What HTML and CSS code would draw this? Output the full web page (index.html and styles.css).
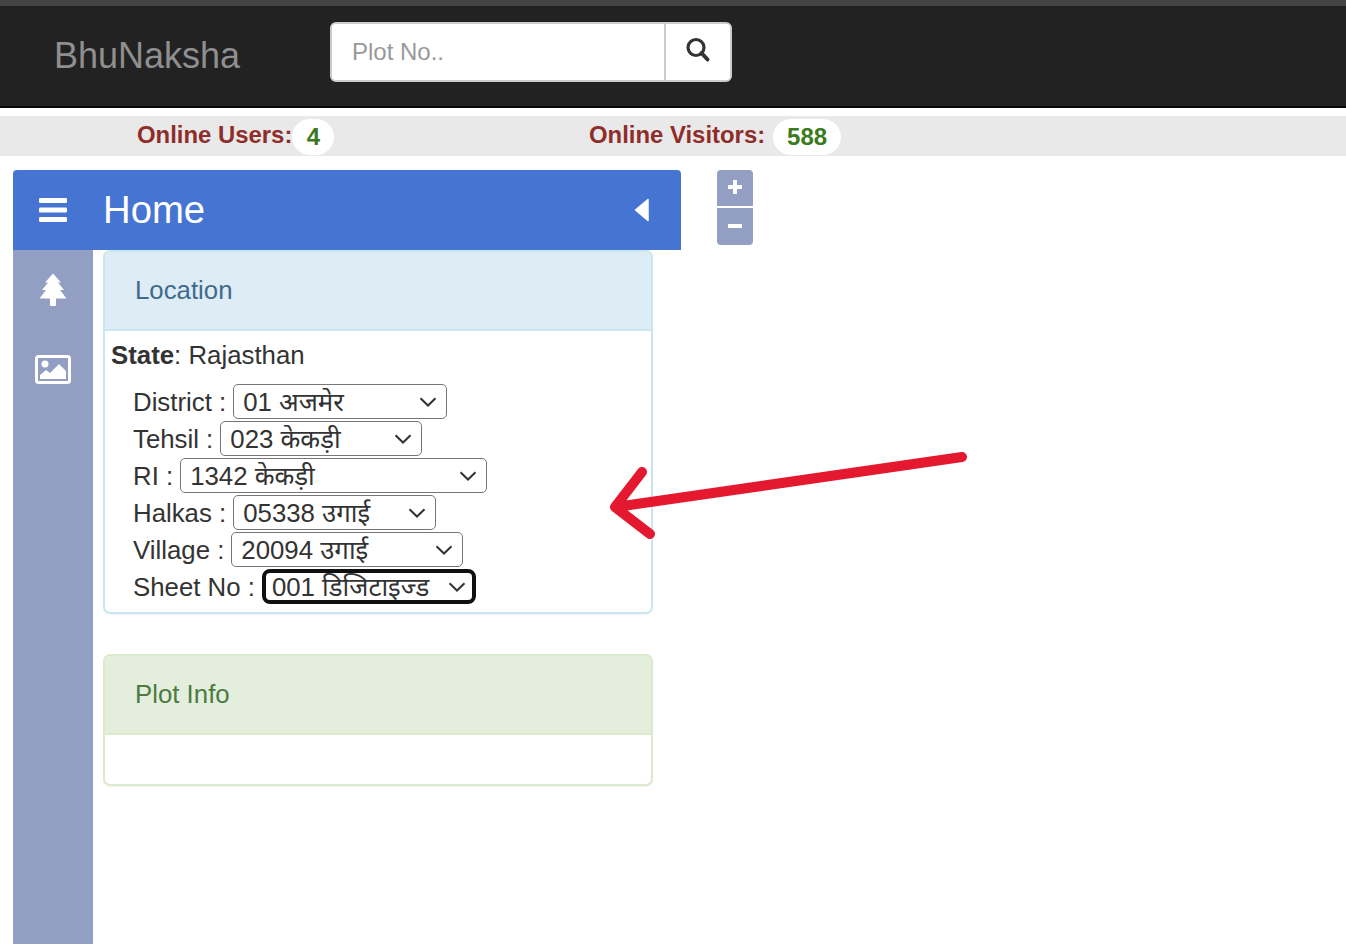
FILE: index.html
```html
<!DOCTYPE html>
<html lang="en">
<head>
<meta charset="utf-8">
<title>BhuNaksha</title>
<link rel="stylesheet" href="styles.css">
</head>
<body>
<header class="topbar">
  <a class="brand">BhuNaksha</a>
  <form class="search">
    <input class="search-input" type="text" placeholder="Plot No..">
    <button class="search-btn" type="button" aria-label="Search">
      <svg width="26" height="26" viewBox="0 0 26 26"><circle cx="11" cy="10.5" r="8" fill="none" stroke="#333" stroke-width="3.2"/><path d="M16.5 16l6 6.5" stroke="#333" stroke-width="4" stroke-linecap="round"/></svg>
    </button>
  </form>
</header>
<div class="status">
  <div class="stat stat-users"><b class="stat-label">Online Users:</b><span class="badge badge-users">4</span></div>
  <div class="stat stat-visitors"><b class="stat-label">Online Visitors:</b><span class="badge badge-visitors">588</span></div>
</div>
<main class="main">
  <section class="panel">
    <div class="panel-head">
      <svg class="menu-icon" width="30" height="26" viewBox="0 0 30 26"><rect x="1" y="1" width="28" height="5" rx="1.2" fill="#fff"/><rect x="1" y="10.500" width="28" height="5" rx="1.2" fill="#fff"/><rect x="1" y="20" width="28" height="5" rx="1.2" fill="#fff"/></svg>
      <h1 class="panel-title">Home</h1>
      <svg class="collapse-icon" width="16" height="24" viewBox="0 0 16 24"><path d="M14 1.500L1.500 12 14 22.500z" fill="#fff" stroke="#fff" stroke-width="1.500" stroke-linejoin="round"/></svg>
    </div>
    <div class="panel-body">
      <nav class="rail">
        <svg class="rail-icon" width="28" height="34" viewBox="0 0 28 34"><path d="M14 .5L22 9.500H19L25 17H21L27.500 25.500H17V32a1 1 0 0 1-1 1H12a1 1 0 0 1-1-1V25.500H.5L7 17H3L9 9.500H6z" fill="#fff"/></svg>
        <svg class="rail-icon rail-icon-pic" width="36" height="30" viewBox="0 0 36 30"><rect x="1.500" y="1.500" width="33" height="26" rx="2" fill="none" stroke="#fff" stroke-width="3"/><circle cx="10" cy="9" r="3.500" fill="#fff"/><path d="M5 24v-4l6-5 4 3 9-9 7 7v8z" fill="#fff"/></svg>
      </nav>
      <div class="cards">
        <article class="card card-info">
          <div class="card-head">Location</div>
          <div class="card-body">
            <p class="state"><b>State</b>: Rajasthan</p>
            <div class="fields">
              <label class="field">District :
                <select class="sel sel-district"><option>01 अजमेर</option></select></label>
              <label class="field">Tehsil :
                <select class="sel sel-tehsil"><option>023 केकड़ी</option></select></label>
              <label class="field">RI :
                <select class="sel sel-ri"><option>1342 केकड़ी</option></select></label>
              <label class="field">Halkas :
                <select class="sel sel-halkas"><option>05338 उगाई</option></select></label>
              <label class="field">Village :
                <select class="sel sel-village"><option>20094 उगाई</option></select></label>
              <label class="field">Sheet No :
                <select class="sel sel-sheet"><option>001 डिजिटाइज्ड</option></select></label>
            </div>
          </div>
        </article>
        <article class="card card-success">
          <div class="card-head">Plot Info</div>
          <div class="card-body card-body-empty"></div>
        </article>
      </div>
    </div>
  </section>
  <div class="zoom">
    <button class="zoom-btn zoom-in" type="button" aria-label="Zoom in"><svg width="14" height="14" viewBox="0 0 14 14"><path d="M5 0h4v5h5v4H9v5H5V9H0V5h5z" fill="#fff"/></svg></button>
    <button class="zoom-btn zoom-out" type="button" aria-label="Zoom out"><svg width="14" height="4" viewBox="0 0 14 4"><rect width="14" height="4" fill="#fff"/></svg></button>
  </div>
</main>
<svg class="arrow" width="370" height="100" viewBox="0 0 370 100"><path d="M352 5L6 55M32 20L5 55 40 82" fill="none" stroke="#e4192f" stroke-width="10" stroke-linecap="round" stroke-linejoin="round"/></svg>
</body>
</html>
```
FILE: styles.css
```css
* { box-sizing: border-box; }
html, body { margin: 0; height: 100%; }
body {
  height: 944px;
  overflow: hidden;
  background: #fff;
  color: #333;
  font-family: "Liberation Sans", "Noto Sans", "DejaVu Sans", sans-serif;
  font-size: 25.800px;
  position: relative;
}
.topbar {
  height: 108px;
  background: #222;
  border-top: 6px solid #444;
  border-bottom: 2px solid #080808;
  display: flex;
  align-items: flex-start;
  padding: 16px 0 0 54px;
}
.brand { color: #8f8f8f; font-size: 36px; line-height: 68px; width: 276px; }
.search {
  width: 402px;
  height: 60px;
  display: flex;
  background: #fff;
  border: 2px solid #ccc;
  border-radius: 6px;
  overflow: hidden;
}
.search-input {
  width: 332px;
  border: 0;
  outline: 0;
  padding: 0 20px;
  font: 24px "Liberation Sans", sans-serif;
  color: #555;
}
.search-input::placeholder { color: #999; opacity: 1; }
.search-btn {
  flex: 1;
  border: 0;
  border-left: 2px solid #ccc;
  background: #fff;
  padding: 0 0 4px;
  display: flex;
  align-items: center;
  justify-content: center;
}
.status {
  margin-top: 8px;
  height: 40px;
  background: #e9e9e9;
  display: flex;
  align-items: flex-start;
  padding-left: 137px;
  padding-top: 4px;
}
.stat { display: flex; align-items: flex-start; }
.stat-users { width: 452px; }
.stat-label { color: #8f2d2a; font-size: 23.900px; line-height: 30px; }
.badge {
  height: 36px;
  margin-top: -1px;
  background: #fff;
  border-radius: 18px;
  color: #3b7a1d;
  font-weight: bold;
  font-size: 24px;
  line-height: 36px;
  text-align: center;
}
.badge-users { width: 42px; }
.badge-visitors { width: 68px; margin-left: 8px; }
.main {
  display: flex;
  align-items: flex-start;
  padding: 14px 0 0 13px;
}
.panel { width: 668px; }
.panel-head {
  height: 80px;
  background: #4674d3;
  border-radius: 4px 4px 0 0;
  display: flex;
  align-items: center;
  padding-left: 25px;
  color: #fff;
}
.panel-title { margin: 0 0 0 35px; font-size: 38.300px; font-weight: normal; flex: 1; }
.collapse-icon { margin-right: 31px; }
.panel-body { display: flex; height: 694px; }
.rail {
  width: 80px;
  background: #929fc2;
  display: flex;
  flex-direction: column;
  align-items: center;
  padding-top: 23px;
}
.rail-icon-pic { margin-top: 48px; }
.cards { margin-left: 10px; width: 550px; }
.card {
  border: 2px solid #c9e7f1;
  border-radius: 7px;
  overflow: hidden;
  box-shadow: 0 1px 1px rgba(0,0,0,.05);
}
.card-info { height: 364px; }
.card-head {
  height: 79px;
  padding-left: 30px;
  line-height: 76px;
  background: #deecf5;
  color: #3f6a8d;
  border-bottom: 2px solid #c9e7f1;
}
.card-success { margin-top: 40px; border-color: #dbe9cd; }
.card-success .card-head { background: #e3efdc; color: #4d7a42; border-bottom-color: #dbe9cd; }
.card-body-empty { height: 49px; }
.card-body { padding: 8px 6px 0; }
.state { margin: 0; line-height: 32px; }
.fields { padding: 13px 0 0 22px; }
.field { display: flex; align-items: center; gap: 7px; height: 37px; line-height: 33px; }
.sel {
  appearance: none;
  height: 35px;
  margin-bottom: 2px;
  border: 1px solid #767676;
  border-radius: 5px;
  background: #fff url("data:image/svg+xml,%3Csvg xmlns='http://www.w3.org/2000/svg' width='18' height='10' viewBox='0 0 18 10'%3E%3Cpath d='M1.500 1.200L9 8.500l7.500-7.300' fill='none' stroke='%23333' stroke-width='2'/%3E%3C/svg%3E") no-repeat right 9px center;
  color: #333;
  font: 25.800px "Liberation Sans", "Noto Sans", sans-serif;
  padding: 0 30px 0 9px;
}
.sel-district { width: 214px; }
.sel-tehsil { width: 202px; }
.sel-ri { width: 307px; }
.sel-halkas { width: 203px; }
.sel-village { width: 232px; }
.sel-sheet { width: 214px; border: 4px solid #101010; border-radius: 8px; padding-left: 6px; padding-right: 27px; background-position: right 6px center; }
.zoom { margin-left: 36px; width: 36px; display: flex; flex-direction: column; gap: 2px; }
.zoom-btn {
  border: 0;
  padding: 0 0 2px;
  background: #929fc2;
  display: flex;
  align-items: center;
  justify-content: center;
  width: 36px;
}
.zoom-in { height: 36px; border-radius: 4px 4px 0 0; }
.zoom-out { height: 37px; border-radius: 0 0 4px 4px; }
.arrow { position: absolute; left: 610px; top: 452px; }
```
